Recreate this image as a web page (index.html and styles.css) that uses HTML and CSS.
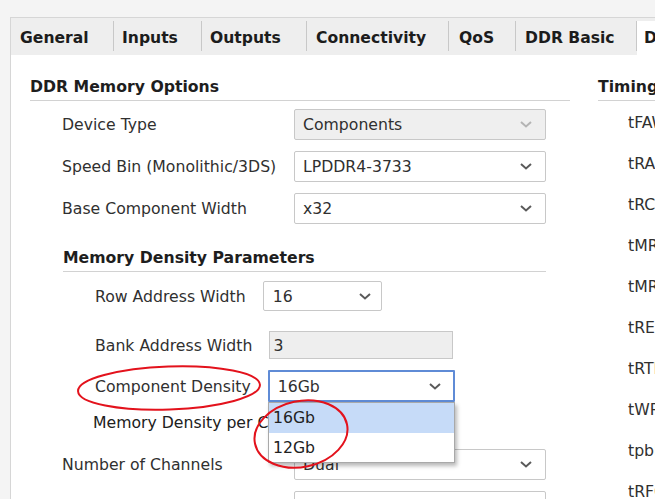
FILE: index.html
```html
<!DOCTYPE html>
<html>
<head>
<meta charset="utf-8">
<link rel="stylesheet" href="styles.css">
</head>
<body>
<div class="frame">
  <div class="tabs">
    <div class="tab t-general">General</div>
    <div class="tab t-inputs">Inputs</div>
    <div class="tab t-outputs">Outputs</div>
    <div class="tab t-conn">Connectivity</div>
    <div class="tab t-qos">QoS</div>
    <div class="tab t-ddrb">DDR Basic</div>
    <div class="tab t-active">DDR Memory</div>
  </div>
  <div class="content">
    <div class="left">
      <div class="heading">DDR Memory Options</div>
      <div class="form">
        <div class="row first">
          <div class="label">Device Type</div>
          <div class="combo disabled"><span>Components</span><svg class="chev" viewBox="0 0 12 7"><path d="M1 1 L6 5.5 L11 1"/></svg></div>
        </div>
        <div class="row">
          <div class="label">Speed Bin (Monolithic/3DS)</div>
          <div class="combo"><span>LPDDR4-3733</span><svg class="chev" viewBox="0 0 12 7"><path d="M1 1 L6 5.5 L11 1"/></svg></div>
        </div>
        <div class="row">
          <div class="label">Base Component Width</div>
          <div class="combo"><span>x32</span><svg class="chev" viewBox="0 0 12 7"><path d="M1 1 L6 5.5 L11 1"/></svg></div>
        </div>
        <div class="sub">
          <div class="heading">Memory Density Parameters</div>
          <div class="srow r-row">
            <div class="slabel">Row Address Width</div>
            <div class="combo c-row"><span>16</span><svg class="chev" viewBox="0 0 12 7"><path d="M1 1 L6 5.5 L11 1"/></svg></div>
          </div>
          <div class="srow r-bank">
            <div class="slabel">Bank Address Width</div>
            <div class="field">3</div>
          </div>
          <div class="srow r-comp">
            <div class="slabel">Component Density</div>
            <div class="combo c-comp"><span>16Gb</span><svg class="chev" viewBox="0 0 12 7"><path d="M1 1 L6 5.5 L11 1"/></svg></div>
          </div>
          <div class="srow r-mem">
            <div class="slabel">Memory Density per Channel</div>
          </div>
        </div>
        <div class="row r-chan">
          <div class="label">Number of Channels</div>
          <div class="combo"><span>Dual</span><svg class="chev" viewBox="0 0 12 7"><path d="M1 1 L6 5.5 L11 1"/></svg></div>
        </div>
        <div class="row r-last">
          <div class="label lbl-last">Ranks</div>
          <div class="combo"><span>1</span><svg class="chev" viewBox="0 0 12 7"><path d="M1 1 L6 5.5 L11 1"/></svg></div>
        </div>
      </div>
    </div>
    <div class="right">
      <div class="heading">Timing Parameters</div>
      <div class="tlist">
        <div class="trow">tFAW</div>
        <div class="trow">tRAS</div>
        <div class="trow">tRCD</div>
        <div class="trow">tMRW</div>
        <div class="trow">tMRD</div>
        <div class="trow">tREFI</div>
        <div class="trow">tRTP</div>
        <div class="trow">tWR</div>
        <div class="trow">tpbR2pbR</div>
        <div class="trow">tRFCab</div>
      </div>
    </div>
  </div>
</div>
<div class="popup">
  <div class="item sel">16Gb</div>
  <div class="item">12Gb</div>
</div>
<svg class="marks" width="655" height="499" viewBox="0 0 655 499">
  <ellipse cx="169" cy="388" rx="91" ry="21.5" transform="rotate(-2 169 388)"/>
  <ellipse cx="301" cy="434" rx="47" ry="33" transform="rotate(-12 301 434)"/>
</svg>
</body>
</html>
```
FILE: styles.css
```css
html, body {
  margin: 0;
  padding: 0;
}
body {
  width: 655px;
  height: 499px;
  overflow: hidden;
  background: #f4f4f4;
  font-family: "DejaVu Sans", "Liberation Sans", sans-serif;
  font-size: 15.7px;
  color: #303030;
  position: relative;
}
.frame {
  margin: 17px 0 0 10px;
  border-top: 1px solid #d6d6d6;
  border-left: 1px solid #d6d6d6;
  background: #ffffff;
  height: 481px;
  overflow: hidden;
}
.tabs {
  display: flex;
  height: 37px;
  background: #eeeeee;
  white-space: nowrap;
}
.tab {
  box-sizing: border-box;
  flex: none;
  display: flex;
  align-items: center;
  font-weight: bold;
  font-size: 15.6px;
  color: #1c1c1c;
  padding-left: 9px;
  padding-top: 4px;
  margin: 3px 0 4px 0;
  border-right: 1px solid #c8c8c8;
}
.t-general { width: 103px; }
.t-inputs { width: 88px; padding-left: 8px; }
.t-outputs { width: 105px; padding-left: 8px; }
.t-conn { width: 142px; }
.t-qos { width: 67px; padding-left: 10px; }
.t-ddrb { width: 121px; }
.t-active {
  border-right: none;
  background: #ffffff;
  margin: 3px 0 0 0;
  padding-bottom: 4px;
  padding-left: 7px;
  width: 120px;
}
.content {
  display: flex;
  padding: 22px 0 0 19px;
}
.left {
  width: 540px;
  flex: none;
}
.right {
  margin-left: 28px;
  flex: none;
  width: 200px;
}
.heading {
  font-weight: bold;
  font-size: 15.7px;
  line-height: 20px;
  height: 20px;
  padding-bottom: 3px;
  border-bottom: 1px solid #d2d2d2;
  color: #1e1e1e;
  white-space: nowrap;
}
.form {
  padding-left: 32px;
}
.row {
  display: flex;
  align-items: center;
  height: 31px;
  margin-top: 11px;
}
.row.first {
  margin-top: 8px;
}
.label {
  width: 232px;
  flex: none;
  white-space: nowrap;
}
.lbl-last {
  padding-top: 14px;
  box-sizing: border-box;
}
.combo {
  box-sizing: border-box;
  width: 252px;
  height: 31px;
  flex: none;
  border: 1px solid #c8c8c8;
  border-radius: 2px;
  background: #ffffff;
  display: flex;
  align-items: center;
  justify-content: space-between;
  padding-left: 8px;
  padding-right: 13px;
  white-space: nowrap;
}
.combo.disabled {
  background: #efefef;
}
.chev {
  width: 12px;
  height: 7px;
  fill: none;
  stroke: #5a5a5a;
  stroke-width: 2;
}
.disabled .chev {
  stroke: #b4b4b4;
}
.sub {
  margin-left: 1px;
  width: 483px;
  margin-top: 24px;
}
.srow {
  display: flex;
  align-items: center;
  padding-left: 32px;
  white-space: nowrap;
}
.slabel {
  flex: none;
}
.r-row {
  margin-top: 9px;
  height: 30px;
  gap: 17px;
}
.c-row {
  width: 119px;
  height: 30px;
  padding-left: 9px;
  padding-right: 10px;
}
.r-bank {
  margin-top: 20px;
  height: 28px;
  gap: 17px;
}
.field {
  box-sizing: border-box;
  width: 184px;
  height: 28px;
  border: 1px solid #c8c8c8;
  background: #eeeeee;
  padding-left: 3px;
  display: flex;
  align-items: center;
}
.r-comp {
  margin-top: 11px;
  height: 32px;
  gap: 17px;
}
.c-comp {
  width: 187px;
  height: 32px;
  border: 2px solid #5f8bd6;
  border-radius: 1px;
  padding-left: 8px;
  padding-right: 12px;
}
.r-mem {
  margin-top: 10px;
  height: 20px;
  padding-left: 30px;
  color: #202020;
}
.r-chan {
  margin-top: 17px;
}
.tlist {
  padding-left: 30px;
  padding-top: 1px;
}
.trow {
  height: 41px;
  display: flex;
  align-items: center;
  white-space: nowrap;
}
.popup {
  position: absolute;
  left: 268px;
  top: 402px;
  width: 187px;
  height: 61px;
  box-sizing: border-box;
  background: #ffffff;
  border: 1px solid #a9a9a9;
  box-shadow: 2px 3px 4px rgba(0, 0, 0, 0.28);
}
.item {
  height: 29.5px;
  display: flex;
  align-items: center;
  padding-left: 4px;
  color: #222222;
}
.item.sel {
  background: #c6dbf8;
}
.marks {
  position: absolute;
  left: 0;
  top: 0;
  pointer-events: none;
}
.marks ellipse {
  fill: none;
  stroke: #e3121c;
  stroke-width: 2;
}
```
